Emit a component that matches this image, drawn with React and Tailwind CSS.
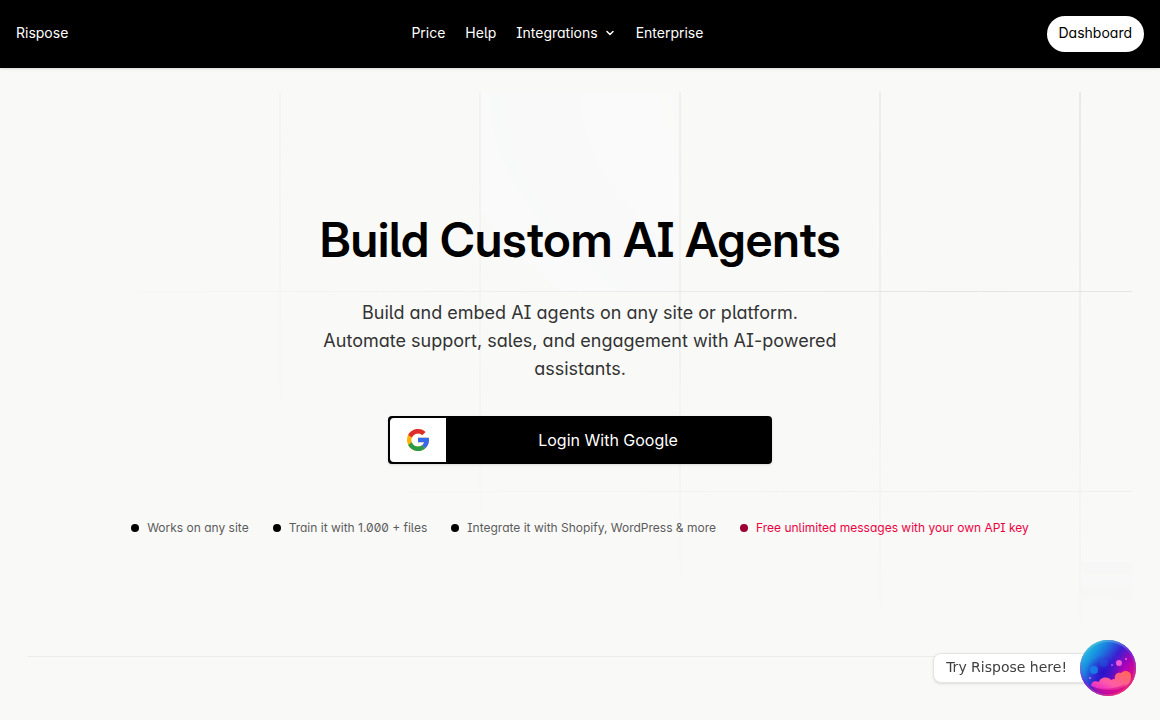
import { ChevronDown } from "lucide-react";

const features = [
    { text: "Works on any site" },
    { text: "Train it with 1.000 + files" },
    { text: "Integrate it with Shopify, WordPress & more" },
    { text: "Free unlimited messages with your own API key", highlight: true },
];

function Header() {
    return (
        <header className="relative z-10 flex items-center justify-between bg-black p-4 text-sm text-white shadow">
            <a href="#" className="-mt-0.5">Rispose</a>
            <nav className="-mt-0.5 flex items-center gap-5">
                <a href="#price">Price</a>
                <a href="#help">Help</a>
                <button type="button" className="flex items-center gap-1.5">
                    Integrations
                    <ChevronDown className="size-3" strokeWidth={3} />
                </button>
                <a href="#enterprise">Enterprise</a>
            </nav>
            <a href="#dashboard" className="h-9 rounded-full bg-white px-3 pt-[7px] text-black">
                Dashboard
            </a>
        </header>
    );
}

function GridBackground() {
    return (
        <svg
            aria-hidden="true"
            className="absolute inset-0 -z-10 h-full w-full stroke-[#d8d8d8] [mask-image:radial-gradient(100%_100%_at_top_right,white,transparent)]"
        >
            <defs>
                <pattern id="hero-grid" width="200" height="200" x="50%" y="-1" patternUnits="userSpaceOnUse">
                    <path d="M100 200V.5M.5 .5H200" fill="none" />
                </pattern>
            </defs>
            <svg x="50%" y="-1" className="overflow-visible fill-[#f9f9fa]">
                <path
                    d="M-100.5 0h201v201h-201Z M699.5 0h201v201h-201Z M-300.5 600h201v201h-201Z"
                    strokeWidth="0"
                />
                <path d="M499.5 471h201v38h-201Z" fill="#eeeef0" strokeWidth="0" />
            </svg>
            <rect width="100%" height="100%" strokeWidth="0" fill="url(#hero-grid)" />
        </svg>
    );
}

function GoogleIcon() {
    return (
        <svg viewBox="4 4 40 40" className="size-[22px]" aria-hidden="true">
            <path fill="#FBB30B" d="M43.611 20.083H42V20H24v8h11.303c-1.649 4.657-6.08 8-11.303 8-6.627 0-12-5.373-12-12s5.373-12 12-12c3.059 0 5.842 1.154 7.961 3.039l5.657-5.657C34.046 6.053 29.268 4 24 4 12.955 4 4 12.955 4 24s8.955 20 20 20 20-8.955 20-20c0-1.341-.138-2.65-.389-3.917z" />
            <path fill="#DE2C31" d="m6.306 14.691 6.571 4.819C14.655 15.108 18.961 12 24 12c3.059 0 5.842 1.154 7.961 3.039l5.657-5.657C34.046 6.053 29.268 4 24 4 16.318 4 9.656 8.337 6.306 14.691z" />
            <path fill="#2C9A48" d="M24 44c5.166 0 9.86-1.977 13.409-5.192l-6.19-5.238A11.91 11.91 0 0 1 24 36c-5.202 0-9.619-3.317-11.283-7.946l-6.522 5.025C9.505 39.556 16.227 44 24 44z" />
            <path fill="#3569EC" d="M43.611 20.083H42V20H24v8h11.303a12.04 12.04 0 0 1-4.087 5.571l6.19 5.238C36.971 39.205 44 34 44 24c0-1.341-.138-2.65-.389-3.917z" />
        </svg>
    );
}

function Hero() {
    return (
        <section className="relative isolate mx-7 mt-6 flex flex-col items-center border-b border-[#ececea] pt-31 pb-30 text-center">
            <GridBackground />
            <h1 className="font-['Inter_Display','Inter',sans-serif] text-5xl leading-none font-semibold text-black">Build Custom AI Agents</h1>
            <p className="mt-[35px] max-w-xl text-lg leading-7 text-[#333]">
                Build and embed AI agents on any site or platform.
                <br />
                Automate support, sales, and engagement with AI-powered assistants.
            </p>
            <button type="button" className="mt-[33px] flex h-12 w-96 max-w-full items-stretch rounded bg-black p-0.5 text-white shadow">
                <span className="flex w-14 items-center justify-center rounded-l bg-white">
                    <GoogleIcon />
                </span>
                <span className="flex-1 self-center">Login With Google</span>
            </button>
            <ul className="mt-14 flex flex-wrap justify-center gap-x-6 gap-y-2 text-xs">
                {features.map((feature) => (
                    <li
                        key={feature.text}
                        className={feature.highlight ? "flex items-center gap-2 text-rose-600" : "flex items-center gap-2 text-[#5c5c5c]"}
                    >
                        <span className={feature.highlight ? "size-2 rounded-full bg-[#9b0032]" : "size-2 rounded-full bg-black"} />
                        {feature.text}
                    </li>
                ))}
            </ul>
        </section>
    );
}

function Orb() {
    return (
        <svg viewBox="0 0 56 56" className="size-14" aria-hidden="true">
            <defs>
                <linearGradient id="orb" x1="0.1" y1="0.15" x2="0.95" y2="0.8">
                    <stop offset="0" stopColor="#19c5e0" />
                    <stop offset="0.25" stopColor="#1b7be0" />
                    <stop offset="0.48" stopColor="#3a1fd0" />
                    <stop offset="0.72" stopColor="#b100b4" />
                    <stop offset="1" stopColor="#f5156c" />
                </linearGradient>
                <linearGradient id="orb-rim" x1="0.1" y1="0" x2="0.8" y2="1">
                    <stop offset="0" stopColor="#35e0d8" />
                    <stop offset="0.5" stopColor="#6a2be0" />
                    <stop offset="1" stopColor="#ff2a6a" />
                </linearGradient>
                <linearGradient id="orb-cloud" x1="0" y1="1" x2="1" y2="0">
                    <stop offset="0" stopColor="#e01ad0" />
                    <stop offset="0.4" stopColor="#ff5ba8" />
                    <stop offset="1" stopColor="#ff6a4d" />
                </linearGradient>
                <radialGradient id="orb-glow">
                    <stop offset="0" stopColor="#2a12c8" stopOpacity="0.9" />
                    <stop offset="1" stopColor="#2a12c8" stopOpacity="0" />
                </radialGradient>
            </defs>
            <circle cx="28" cy="28" r="28" fill="url(#orb)" />
            <circle cx="23" cy="33" r="18" fill="url(#orb-glow)" />
            <circle cx="28" cy="28" r="27" fill="none" stroke="url(#orb-rim)" strokeWidth="2" />
            <circle cx="14" cy="30" r="4" fill="#1688e8" opacity="0.8" />
            <circle cx="24" cy="23" r="4" fill="#1e63dc" opacity="0.4" />
            <circle cx="39" cy="23" r="3" fill="#f05ad8" />
            <circle cx="46" cy="19" r="1" fill="#ff62c8" />
            <circle cx="32" cy="25" r="1" fill="#c34bf0" />
            <circle cx="10" cy="38" r="1" fill="#d070ff" />
            <path
                d="M11 46c0-4 4-6 8-4 1-5 9-6 12-2 1-1 3-1 4-1-1-4 2-7 6-6 3-4 11-2 10 4 0 5-3 8-7 10-9 4-22 4-33-1Z"
                fill="url(#orb-cloud)"
            />
            <path d="M12 47c10 3 23 2 34-3-5 10-26 13-34 3Z" fill="#e0108c" opacity="0.6" />
        </svg>
    );
}

function ChatWidget() {
    return (
        <div className="fixed right-6 bottom-6 z-20 flex items-center">
            <div className="-mr-4 rounded-lg border border-stone-200 bg-white pt-[3px] pr-7 pb-[5px] pl-3 font-['DejaVu_Sans',sans-serif] text-sm text-neutral-700 shadow-sm">
                Try Rispose here!
            </div>
            <button type="button" aria-label="Open chat" className="relative rounded-full">
                <Orb />
            </button>
        </div>
    );
}

export default function App() {
    return (
        <div className="min-h-screen bg-[#f9faf8] font-['Inter',sans-serif] [font-feature-settings:'ss02','cv11']">
            <Header />
            <main>
                <Hero />
            </main>
            <ChatWidget />
        </div>
    );
}
